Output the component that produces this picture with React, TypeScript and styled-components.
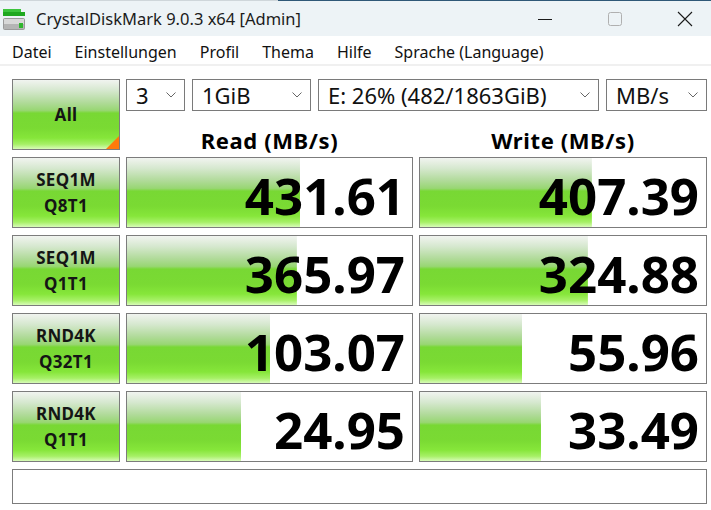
import React from "react";
import styled, { createGlobalStyle } from "styled-components";

const GlobalStyle = createGlobalStyle`
  html, body {
    margin: 0;
    padding: 0;
    background: #ffffff;
  }
  body {
    font-family: "Noto Sans", "Open Sans", sans-serif;
    color: #000;
  }
`;

const meterGradient = `linear-gradient(
  to bottom,
  #f1f4f0 0%,
  #d6e8cf 15%,
  #b2db9c 32%,
  #98d673 44%,
  #78d834 48%,
  #7ada33 70%,
  #86e63a 84%,
  #a6f066 93%,
  #d8fcb8 100%
)`;

type Result = {
  name: string;
  sub: string;
  read: string;
  write: string;
  readBar: number;
  writeBar: number;
};

const results: Result[] = [
  { name: "SEQ1M", sub: "Q8T1", read: "431.61", write: "407.39", readBar: 60.7, writeBar: 60.1 },
  { name: "SEQ1M", sub: "Q1T1", read: "365.97", write: "324.88", readBar: 59.6, writeBar: 58.7 },
  { name: "RND4K", sub: "Q32T1", read: "103.07", write: "55.96", readBar: 50.2, writeBar: 35.7 },
  { name: "RND4K", sub: "Q1T1", read: "24.95", write: "33.49", readBar: 40, writeBar: 42.3 },
];

const menuItems = ["Datei", "Einstellungen", "Profil", "Thema", "Hilfe", "Sprache (Language)"];

const Window = styled.div`
  width: 711px;
  height: 510px;
  display: flex;
  flex-direction: column;
  background: #fff;
  overflow: hidden;
`;

const TopEdge = styled.div`
  height: 1px;
  background: linear-gradient(to right, #cfd6da 0 278px, #2f5877 278px);
`;

const TitleBar = styled.div`
  height: 35px;
  background: #edf3f6;
  display: flex;
  align-items: center;
  padding-left: 3px;
`;

const Title = styled.div`
  font-family: "Noto Sans", sans-serif;
  font-size: 16.5px;
  margin-left: 9px;
  color: #1b1b1b;
  flex: 1;
`;

const Caption = styled.div`
  display: flex;
  height: 100%;
  margin-right: -9px;
`;

const CaptionButton = styled.div`
  width: 70px;
  height: 100%;
  display: flex;
  align-items: center;
  justify-content: center;
`;

const MenuBar = styled.div`
  height: 30px;
  box-sizing: border-box;
  display: flex;
  align-items: center;
  padding: 3px 0 0 12px;
  gap: 23px;
  border-bottom: 2px solid #f0f0f0;
`;

const MenuItem = styled.span`
  font-family: "Noto Sans", sans-serif;
  font-size: 16px;
  color: #111;
`;

const Panel = styled.div`
  display: grid;
  grid-template-columns: 108px 287px 288px;
  grid-template-rows: repeat(5, 71px) 35px;
  column-gap: 6px;
  row-gap: 7px;
  padding: 13px 0 0 12px;
`;

const TestButton = styled.div`
  position: relative;
  box-sizing: border-box;
  border: 1px solid #7c7c7c;
  background: ${meterGradient};
  display: flex;
  flex-direction: column;
  align-items: center;
  justify-content: center;
  font-family: "Noto Sans", sans-serif;
  font-weight: 700;
  font-size: 17px;
  line-height: 26px;
  letter-spacing: 0.3px;
  color: #151515;
  overflow: hidden;
`;

const Corner = styled.div`
  position: absolute;
  right: 0;
  bottom: 0;
  width: 0;
  height: 0;
  border-left: 13px solid transparent;
  border-bottom: 13px solid #ff7a0a;
`;

const Controls = styled.div`
  grid-column: 2 / 4;
  display: flex;
  flex-direction: column;
`;

const ComboRow = styled.div`
  display: flex;
  gap: 7px;
  height: 35px;
`;

const Combo = styled.div<{ $w: number }>`
  width: ${(p) => p.$w}px;
  box-sizing: border-box;
  border: 1px solid #7a7a7a;
  background: #fff;
  display: flex;
  align-items: center;
  padding: 0 8px 0 9px;
  font-family: "Noto Sans", sans-serif;
  font-size: 22px;
  color: #111;
`;

const ComboText = styled.span`
  flex: 1;
  white-space: nowrap;
`;

const Headers = styled.div`
  flex: 1;
  display: grid;
  grid-template-columns: 287px 288px;
  column-gap: 6px;
  align-items: center;
`;

const Header = styled.div`
  text-align: center;
  font-family: "Noto Sans", sans-serif;
  font-weight: 700;
  font-size: 22px;
  letter-spacing: 0.6px;
  padding-top: 14px;
`;

const Meter = styled.div`
  box-sizing: border-box;
  border: 1px solid #7c7c7c;
  background-color: #fff;
  background-image: ${meterGradient};
  background-repeat: no-repeat;
  display: flex;
  align-items: center;
  justify-content: flex-end;
  padding: 4px 7px 0 0;
  font-family: "Noto Sans", sans-serif;
  font-weight: 700;
  font-size: 51px;
  color: #000;
`;

const Status = styled.div`
  grid-column: 1 / 4;
  box-sizing: border-box;
  border: 1px solid #7c7c7c;
  background: #fff;
`;

const Chevron = () => (
  <svg width="10" height="6" viewBox="0 0 10 6">
    <path d="M0.5 0.5 L5 5 L9.5 0.5" fill="none" stroke="#666" strokeWidth="1" />
  </svg>
);

const AppIcon = () => (
  <svg width="24" height="24" viewBox="0 0 24 24">
    <rect x="0" y="2" width="18" height="3" fill="#3cc43c" />
    <rect x="0" y="5" width="22" height="4" fill="#1fa81f" />
    <rect x="0" y="11" width="22" height="12" rx="2" fill="#9a9a9a" />
    <rect x="1" y="12" width="20" height="5" fill="#d8d8d8" />
    <rect x="1" y="17" width="20" height="5" fill="#b4b4b4" />
    <rect x="16" y="16" width="4" height="5" fill="#2fb52f" />
  </svg>
);

export default function App() {
  return (
    <>
      <GlobalStyle />
      <Window>
        <TopEdge />
        <TitleBar>
          <AppIcon />
          <Title>CrystalDiskMark 9.0.3 x64 [Admin]</Title>
          <Caption>
            <CaptionButton>
              <svg width="16" height="16" viewBox="0 0 16 16">
                <path d="M1 8.5 H15" stroke="#1a1a1a" strokeWidth="1" />
              </svg>
            </CaptionButton>
            <CaptionButton>
              <svg width="16" height="16" viewBox="0 0 16 16">
                <rect x="1.5" y="1.5" width="13" height="13" rx="2" fill="none" stroke="#b0b0b0" strokeWidth="1" />
              </svg>
            </CaptionButton>
            <CaptionButton>
              <svg width="16" height="16" viewBox="0 0 16 16">
                <path d="M1 1 L15 15 M15 1 L1 15" stroke="#1a1a1a" strokeWidth="1.1" />
              </svg>
            </CaptionButton>
          </Caption>
        </TitleBar>
        <MenuBar>
          {menuItems.map((m) => (
            <MenuItem key={m}>{m}</MenuItem>
          ))}
        </MenuBar>
        <Panel>
          <TestButton>
            All
            <Corner />
          </TestButton>
          <Controls>
            <ComboRow>
              <Combo $w={59}>
                <ComboText>3</ComboText>
                <Chevron />
              </Combo>
              <Combo $w={119}>
                <ComboText>1GiB</ComboText>
                <Chevron />
              </Combo>
              <Combo $w={281}>
                <ComboText>E: 26% (482/1863GiB)</ComboText>
                <Chevron />
              </Combo>
              <Combo $w={101}>
                <ComboText>MB/s</ComboText>
                <Chevron />
              </Combo>
            </ComboRow>
            <Headers>
              <Header>Read (MB/s)</Header>
              <Header>Write (MB/s)</Header>
            </Headers>
          </Controls>
          {results.map((r) => (
            <React.Fragment key={r.name + r.sub}>
              <TestButton>
                <span>{r.name}</span>
                <span>{r.sub}</span>
              </TestButton>
              <Meter style={{ backgroundSize: `${r.readBar}% 100%` }}>{r.read}</Meter>
              <Meter style={{ backgroundSize: `${r.writeBar}% 100%` }}>{r.write}</Meter>
            </React.Fragment>
          ))}
          <Status />
        </Panel>
      </Window>
    </>
  );
}
